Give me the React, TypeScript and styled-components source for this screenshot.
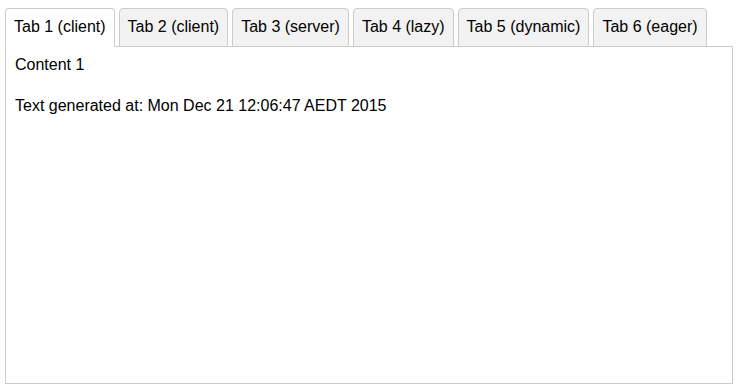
import React, { FC, useState } from 'react';
import styled, { createGlobalStyle } from 'styled-components';

const GlobalStyle = createGlobalStyle`
	html, body {
		margin: 0;
		padding: 0;
		background: #ffffff;
	}
	body {
		font-family: 'Liberation Sans', Arial, Helvetica, sans-serif;
		font-size: 16px;
		color: #000000;
	}
`;

const Wrapper = styled.div`
	padding: 8px 6px 6px 5px;
	width: 739px;
	height: 390px;
	box-sizing: border-box;
	display: flex;
	flex-direction: column;
`;

const TabBar = styled.ul`
	display: flex;
	list-style: none;
	margin: 0;
	padding: 0;
	position: relative;
	z-index: 1;
`;

const Tab = styled.li<{ $active?: boolean }>`
	display: flex;
	align-items: center;
	height: 39px;
	box-sizing: border-box;
	padding: 0 8px 1px;
	margin-right: 4px;
	margin-bottom: -1px;
	border: 1px solid #cccccc;
	border-bottom: 1px solid ${p => (p.$active ? '#ffffff' : '#cccccc')};
	border-radius: 4px 4px 0 0;
	background: ${p => (p.$active ? '#ffffff' : '#f2f2f2')};
	cursor: pointer;
	white-space: nowrap;
`;

const Panel = styled.div`
	flex: 1;
	border: 1px solid #cccccc;
	padding: 9px 9px;
	line-height: 18px;
`;

const Paragraph = styled.p`
	margin: 23px 0 0;
`;

const tabs = [
	'Tab 1 (client)',
	'Tab 2 (client)',
	'Tab 3 (server)',
	'Tab 4 (lazy)',
	'Tab 5 (dynamic)',
	'Tab 6 (eager)',
];

const App: FC = () => {
	const [active, setActive] = useState(0);
	return (
		<Wrapper>
			<GlobalStyle />
			<TabBar>
				{tabs.map((t, i) => (
					<Tab key={t} $active={i === active} onClick={() => setActive(i)}>
						{t}
					</Tab>
				))}
			</TabBar>
			<Panel>
				<div>Content {active + 1}</div>
				<Paragraph>Text generated at: Mon Dec 21 12:06:47 AEDT 2015</Paragraph>
			</Panel>
		</Wrapper>
	);
};

export default App;
